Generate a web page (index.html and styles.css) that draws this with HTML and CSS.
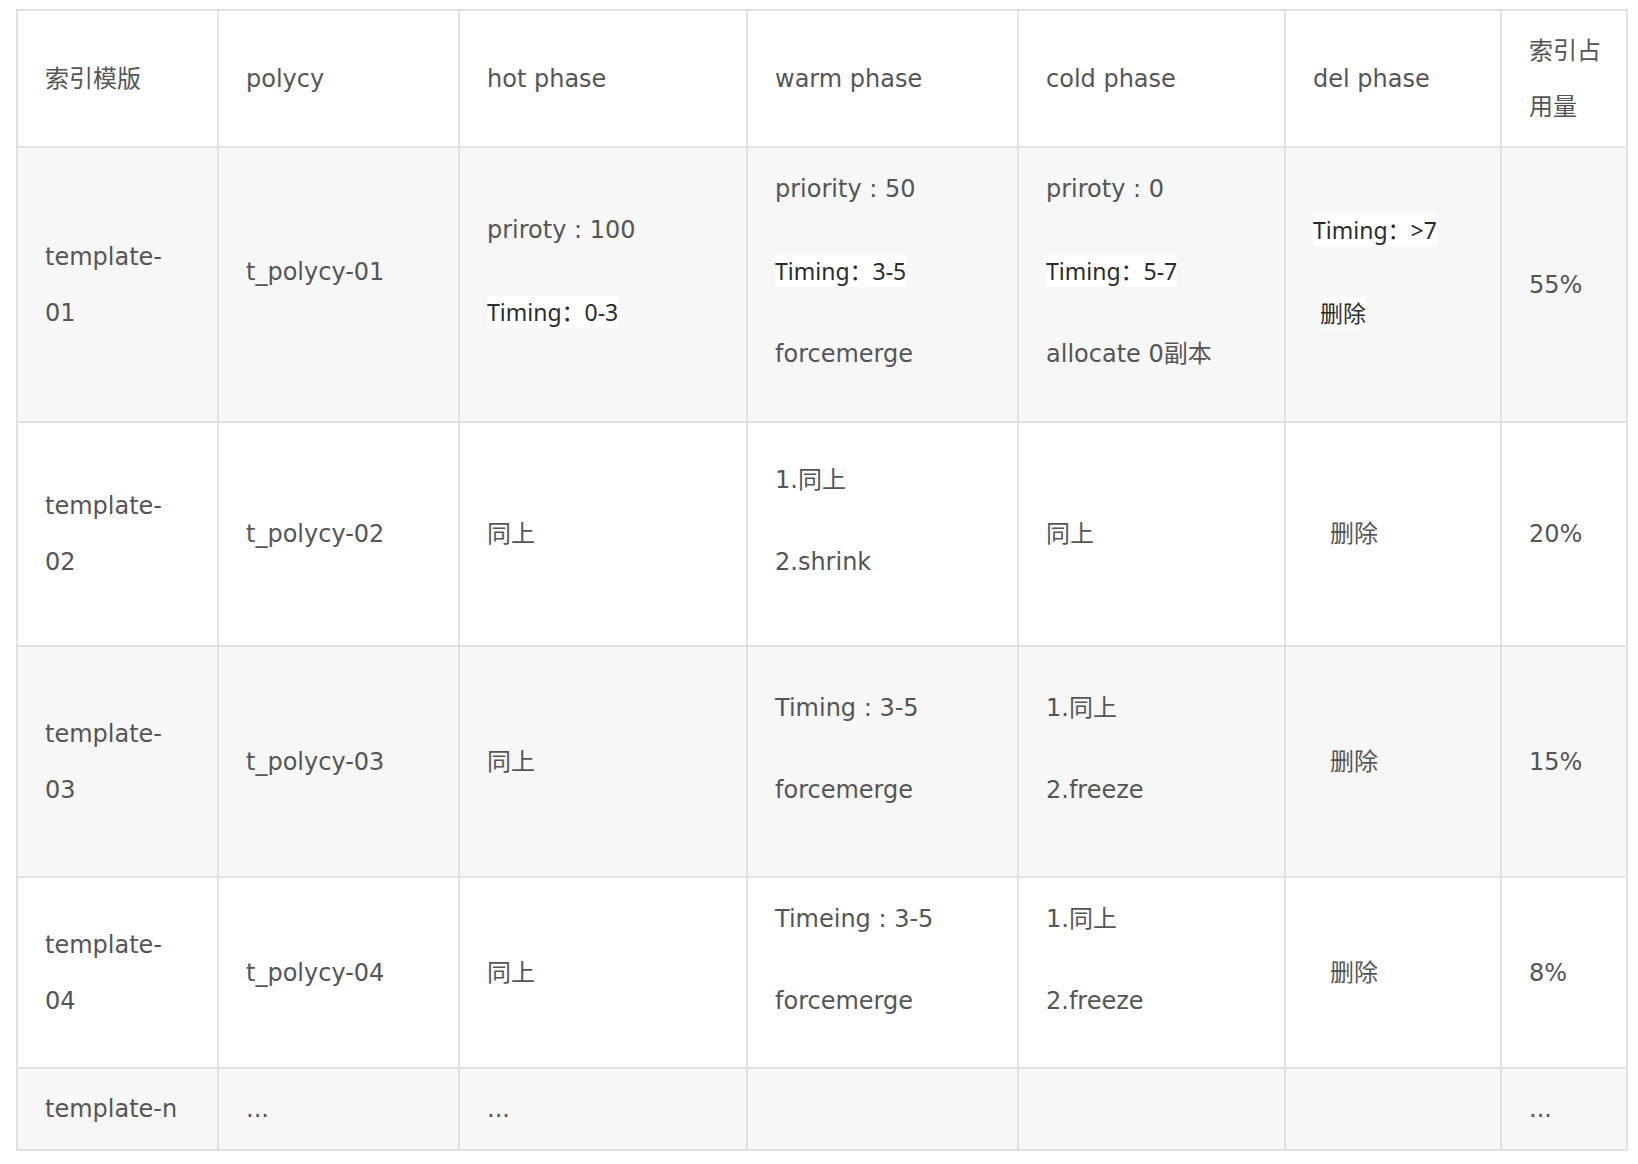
FILE: index.html
```html
<!DOCTYPE html>
<html lang="zh">
<head>
<meta charset="utf-8">
<title>ILM policy table</title>
<link rel="stylesheet" href="styles.css">
</head>
<body>
<table class="ilm">
  <colgroup>
    <col class="c1"><col class="c2"><col class="c3"><col class="c4"><col class="c5"><col class="c6"><col class="c7">
  </colgroup>
  <tr class="r-head">
    <td>索引模版</td>
    <td>polycy</td>
    <td>hot phase</td>
    <td>warm phase</td>
    <td>cold phase</td>
    <td>del phase</td>
    <td>索引占<br>用量</td>
  </tr>
  <tr class="r1 alt">
    <td>template-<br>01</td>
    <td><p>t_polycy-01</p></td>
    <td><p>priroty : 100</p><p><span class="hl">Timing：0-3</span></p></td>
    <td><p>priority : 50</p><p><span class="hl">Timing：3-5</span></p><p>forcemerge</p></td>
    <td><p>priroty : 0</p><p><span class="hl">Timing：5-7</span></p><p>allocate 0副本</p></td>
    <td><p><span class="hl">Timing：&gt;7</span></p><p><span class="hl ind1">删除</span></p></td>
    <td>55%</td>
  </tr>
  <tr class="r2">
    <td>template-<br>02</td>
    <td>t_polycy-02</td>
    <td>同上</td>
    <td><p>1.同上</p><p>2.shrink</p></td>
    <td>同上</td>
    <td><span class="ind2">删除</span></td>
    <td>20%</td>
  </tr>
  <tr class="r3 alt">
    <td>template-<br>03</td>
    <td>t_polycy-03</td>
    <td>同上</td>
    <td><p>Timing : 3-5</p><p>forcemerge</p></td>
    <td><p>1.同上</p><p>2.freeze</p></td>
    <td><span class="ind2">删除</span></td>
    <td>15%</td>
  </tr>
  <tr class="r4">
    <td>template-<br>04</td>
    <td>t_polycy-04</td>
    <td>同上</td>
    <td><p>Timeing : 3-5</p><p>forcemerge</p></td>
    <td><p>1.同上</p><p>2.freeze</p></td>
    <td><span class="ind2">删除</span></td>
    <td>8%</td>
  </tr>
  <tr class="r5 alt">
    <td>template-n</td>
    <td>...</td>
    <td>...</td>
    <td></td>
    <td></td>
    <td></td>
    <td>...</td>
  </tr>
</table>
</body>
</html>
```

FILE: styles.css
```css
html, body {
  margin: 0;
  padding: 0;
  background: #ffffff;
}

body {
  font-family: "DejaVu Sans", "Noto Sans CJK SC", sans-serif;
  font-size: 24px;
  color: #555555;
}

.ilm {
  margin: 9px 0 0 16px;
  border-collapse: collapse;
  table-layout: fixed;
  width: 1610px;
}

.c1 { width: 201px; }
.c2 { width: 241px; }
.c3 { width: 288px; }
.c4 { width: 271px; }
.c5 { width: 267px; }
.c6 { width: 216px; }
.c7 { width: 126px; }

.ilm td {
  border: 2px solid #e1e1e1;
  padding: 6px 20px 6px 27px;
  line-height: 56px;
  vertical-align: middle;
  white-space: nowrap;
}

.ilm p {
  margin: 0 0 26px 0;
}

.ilm tr { background: #ffffff; }
.ilm tr.alt { background: #f7f7f7; }

.r-head { height: 137px; }
.r1 { height: 275px; }
.r2 { height: 224px; }
.r3 { height: 231px; }
.r4 { height: 191px; }
.r5 { height: 82px; }

.hl {
  font-family: "Noto Sans", "Noto Sans CJK SC", sans-serif;
  font-size: 23px;
  color: #2b2b2b;
  background: #ffffff;
}

.ind1 { margin-left: 7px; }
.ind2 { margin-left: 17px; }
```
